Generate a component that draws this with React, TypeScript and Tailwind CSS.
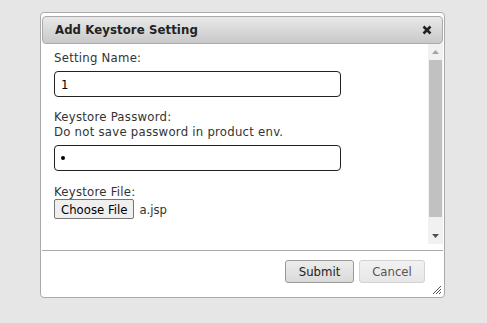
import React from "react";

const font = { fontFamily: '"DejaVu Sans Condensed", "DejaVu Sans", sans-serif' };

function CloseIcon() {
  return (
    <svg width="10" height="10" viewBox="0 0 10 10">
      <path d="M1.5 1.5 L8.5 8.5 M8.5 1.5 L1.5 8.5" stroke="#222" strokeWidth="2.6" strokeLinecap="butt" />
    </svg>
  );
}

function ResizeHandle() {
  return (
    <svg width="12" height="12" viewBox="0 0 12 12" className="absolute right-[2px] bottom-[2px]">
      <path d="M11 3 L3 11 M11 6 L6 11 M11 9 L9 11" stroke="#555" strokeWidth="1" />
    </svg>
  );
}

export default function App() {
  return (
    <div className="w-[487px] h-[323px] bg-[#e6e6e6] overflow-hidden pt-[12px] pl-[40px]" style={font}>
      <div className="relative w-[405px] h-[286px] bg-white border border-[#aaaaaa] rounded-[4px] pt-[3px] px-[1px] flex flex-col">
        {/* header */}
        <div className="h-[28px] shrink-0 border border-[#aaaaaa] rounded-[4px] bg-gradient-to-b from-[#e9e9e9] to-[#c9c9c9] flex items-center justify-between pl-[12px] pr-[10px]">
          <span className="text-[13px] font-bold text-[#222] tracking-[0.1px]">Add Keystore Setting</span>
          <CloseIcon />
        </div>
        {/* body */}
        <div className="h-[200px] shrink-0 flex">
          <div className="flex-1 px-[12px] pt-[6px] text-[13px] leading-[15px] text-[#333]">
            <div className="tracking-[0.25px]">Setting Name:</div>
            <div className="mt-[6px] w-[287px] h-[26px] border border-[#222] rounded-[4px] flex items-center pl-[6px] text-black">1</div>
            <div className="mt-[12px] tracking-[0.25px]">Keystore Password:</div>
            <div className="tracking-[0.25px]">Do not save password in product env.</div>
            <div className="mt-[6px] w-[287px] h-[26px] border border-[#222] rounded-[4px] flex items-center pl-[6px] text-black">
              <span className="w-[4px] h-[4px] rounded-full bg-black inline-block"></span>
            </div>
            <div className="mt-[13px] tracking-[0.25px]">Keystore File:</div>
            <div className="flex items-center">
              <div className="h-[20px] px-[6px] bg-[#efefef] border border-[#767676] rounded-[2px] flex items-center text-black">Choose File</div>
              <span className="ml-[5px] text-[#333]">a.jsp</span>
            </div>
          </div>
          {/* scrollbar */}
          <div className="w-[15px] bg-[#f1f1f1] flex flex-col items-center">
            <div className="h-[16px] w-full flex items-center justify-center">
              <svg width="7" height="4" viewBox="0 0 7 4"><path d="M3.5 0 L7 4 L0 4 Z" fill="#a3a3a3" /></svg>
            </div>
            <div className="w-[13px] h-[157px] bg-[#c1c1c1]"></div>
            <div className="flex-1"></div>
            <div className="h-[16px] w-full flex items-center justify-center">
              <svg width="7" height="4" viewBox="0 0 7 4"><path d="M0 0 L7 0 L3.5 4 Z" fill="#505050" /></svg>
            </div>
          </div>
        </div>
        {/* divider and buttons */}
        <div className="mt-[6px] border-t border-[#aaaaaa] flex justify-end gap-[5px] pt-[9px] pr-[18px]">
          <div className="w-[69px] h-[23px] border border-[#999] rounded-[3px] bg-gradient-to-b from-[#ececec] to-[#dadada] flex items-center justify-center text-[13px] text-[#222]">Submit</div>
          <div className="w-[66px] h-[23px] border border-[#d3d3d3] rounded-[3px] bg-gradient-to-b from-[#f2f2f2] to-[#e6e6e6] flex items-center justify-center text-[13px] text-[#555]">Cancel</div>
        </div>
        <ResizeHandle />
      </div>
    </div>
  );
}
